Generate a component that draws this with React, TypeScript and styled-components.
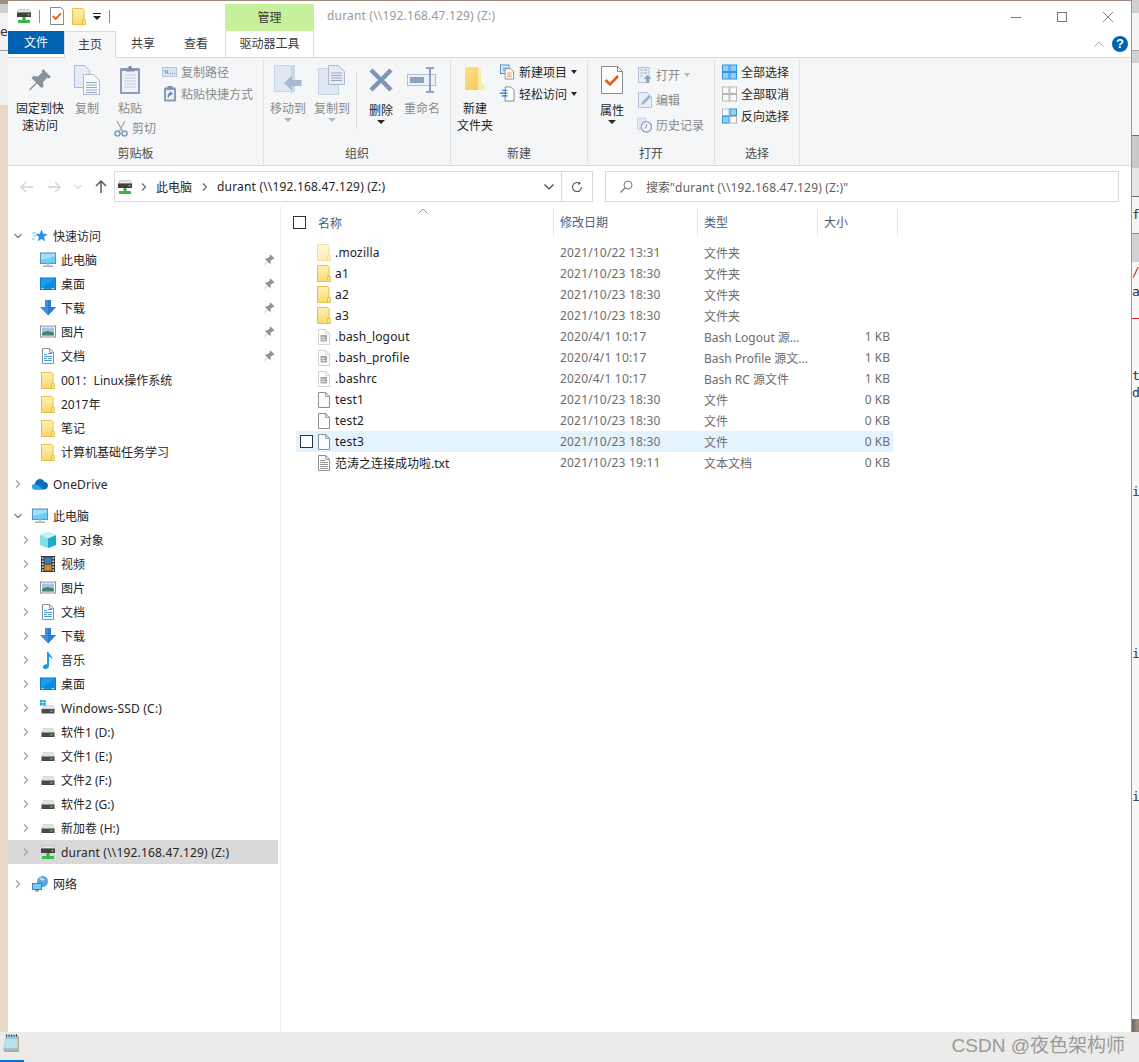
import React from "react";
import styled, { createGlobalStyle } from "styled-components";

const UI_FONT = `"Noto Sans", "Noto Sans CJK SC", sans-serif`;
const LATIN_SPACING = "0.18px";

const isLatin = (text: string) => /^[\x20-\x7e]*$/.test(text);

const GlobalStyle = createGlobalStyle`
  html, body {
    margin: 0;
    padding: 0;
    background: #ebebe9;
  }
  * {
    box-sizing: border-box;
  }
`;

/* ---------- small drawn icons ---------- */

const DriveNetIcon = () => (
  <svg width="16" height="16" viewBox="0 0 16 16">
    <path d="M2.5 1.5h11l1 3H1.5z" fill="#e4e4e4" stroke="#b9b9b9" strokeWidth=".6" />
    <rect x="1" y="4.5" width="14" height="4.5" fill="#3f3f3f" />
    <rect x="11.5" y="6" width="2" height="1.4" fill="#62d162" />
    <rect x="6.5" y="9" width="3" height="3" fill="#39a845" />
    <rect x="2" y="12" width="12" height="3" fill="#3cb64a" />
  </svg>
);

const DriveIcon = () => (
  <svg width="16" height="16" viewBox="0 0 16 16">
    <path d="M3 4.5h10l1.5 4h-13z" fill="#e3e3e3" stroke="#c4c4c4" strokeWidth=".5" />
    <rect x="1.5" y="8.5" width="13" height="4.5" fill="#4a4a4a" />
    <rect x="10.5" y="10" width="2" height="1.4" fill="#66d466" />
  </svg>
);

const SystemDriveIcon = () => (
  <svg width="16" height="16" viewBox="0 0 16 16">
    <path d="M3.5 5.5h9.5l1.5 3.5h-12z" fill="#e3e3e3" stroke="#c4c4c4" strokeWidth=".5" />
    <rect x="1.5" y="9" width="13" height="4.5" fill="#4a4a4a" />
    <rect x="10.5" y="10.5" width="2" height="1.4" fill="#66d466" />
    <path d="M0 0h2.6v2.4H0zM3.2 0h2.6v2.4H3.2zM0 3h2.6v2.4H0zM3.2 3h2.6v2.4H3.2z" fill="#12a5ec" />
  </svg>
);

const FolderIcon = ({ faded }: { faded?: boolean }) => (
  <svg width="14" height="17" viewBox="0 0 14 17" opacity={faded ? 0.5 : 1}>
    <defs>
      <linearGradient id="folderFill" x1="0" y1="0" x2="0" y2="1">
        <stop offset="0" stopColor="#ffefb4" />
        <stop offset="1" stopColor="#fcd971" />
      </linearGradient>
    </defs>
    <path d="M.5.5h10.5l1 1v14.9H.5z" fill="url(#folderFill)" stroke="#e9bf45" />
    <path d="M10.5 11.5h2.8v4.9h-2.8z" fill="#fde392" stroke="#e9bf45" />
  </svg>
);

const PageOutline = ({ stroke }: { stroke: string }) => (
  <path d="M1.5.5h7.2l3.8 3.8v11.2h-11z M8.7.5v3.8h3.8" fill="#fdfdfd" stroke={stroke} />
);

const FileIcon = () => (
  <svg width="14" height="16" viewBox="0 0 14 16">
    <PageOutline stroke="#8f8f8f" />
  </svg>
);

const ConfigFileIcon = () => (
  <svg width="14" height="16" viewBox="0 0 14 16">
    <PageOutline stroke="#d3d3d3" />
    <rect x="3.5" y="6" width="6.5" height="6.5" fill="#a5a9ad" />
    <rect x="4.5" y="8" width="3" height="1" fill="#e5e5e5" />
    <rect x="4.5" y="10" width="4" height="1" fill="#e5e5e5" />
  </svg>
);

const TextFileIcon = () => (
  <svg width="14" height="16" viewBox="0 0 14 16">
    <PageOutline stroke="#8f8f8f" />
    <path d="M3 5.5h5M3 7.5h8M3 9.5h8M3 11.5h8M3 13.5h8" stroke="#8a8a8a" strokeWidth=".9" />
  </svg>
);

const MonitorIcon = () => (
  <svg width="16" height="16" viewBox="0 0 16 16">
    <rect x=".5" y="1" width="15" height="10.5" fill="#6fcdf7" stroke="#5c93b8" />
    <path d="M1 2h14v2.5L1 8z" fill="#a3e1fb" />
    <rect x="6.5" y="11.5" width="3" height="2" fill="#c2c8cc" />
    <rect x="3" y="13.5" width="10" height="1.5" fill="#a8b0b6" />
  </svg>
);

const DesktopIcon = () => (
  <svg width="16" height="16" viewBox="0 0 16 16">
    <rect x=".5" y="2" width="15" height="11.5" fill="#199ff0" stroke="#0f78c9" />
    <path d="M1 12.5L14.5 3v9.5z" fill="#0f8ae0" />
    <path d="M1.5 12.6h2M12 12.6h2" stroke="#fff" strokeWidth=".8" />
  </svg>
);

const DownloadIcon = () => (
  <svg width="16" height="16" viewBox="0 0 16 16">
    <path d="M5 0h6v7h5l-8 8.5L0 7h5z" fill="#3f8fdd" />
    <path d="M8 0h3v7h5l-8 8.5z" fill="#2f7ccb" />
  </svg>
);

const PicturesIcon = () => (
  <svg width="16" height="16" viewBox="0 0 16 16">
    <rect x=".5" y="2" width="15" height="11" fill="#fff" stroke="#8f8f8f" />
    <rect x="2" y="3.5" width="12" height="8" fill="#9dc6e8" />
    <path d="M2 9c3-2.5 6-2 12-.5v3H2z" fill="#4f7f72" />
  </svg>
);

const DocsIcon = () => (
  <svg width="14" height="16" viewBox="0 0 14 16">
    <PageOutline stroke="#8f8f8f" />
    <path d="M3 6.5h3M7 5.5h4M3 8.5h8M3 10.5h3M7 10.5h4M3 12.5h8" stroke="#2f8fd6" strokeWidth=".9" />
  </svg>
);

const ObjectsIcon = () => (
  <svg width="16" height="16" viewBox="0 0 16 16">
    <path d="M8 0l8 3v10l-8 3-8-3V3z" fill="#7fe2ea" />
    <path d="M8 6.5l8-3.5v10l-8 3z" fill="#1fa9cf" />
    <path d="M8 0l8 3-8 3.5L0 3z" fill="#c3f3f6" />
  </svg>
);

const VideoIcon = () => (
  <svg width="14" height="16" viewBox="0 0 14 16">
    <rect width="14" height="16" fill="#3c3c3c" />
    <path d="M1 1.5h1.6v1.4H1zM1 4.5h1.6v1.4H1zM1 7.5h1.6v1.4H1zM1 10.5h1.6v1.4H1zM1 13.5h1.6v1.4H1zM11.4 1.5H13v1.4h-1.6zM11.4 4.5H13v1.4h-1.6zM11.4 7.5H13v1.4h-1.6zM11.4 10.5H13v1.4h-1.6zM11.4 13.5H13v1.4h-1.6z" fill="#d8d8d8" />
    <rect x="3.5" y="1.5" width="7" height="6" fill="#3d78c4" />
    <rect x="3.5" y="8.5" width="7" height="6" fill="#c98f2c" />
  </svg>
);

const MusicIcon = () => (
  <svg width="16" height="17" viewBox="0 0 16 17">
    <path d="M7 0h1.6c.3 2.6 4 3.8 4 7.2-1-1.6-2.4-2.2-3.6-2.4V14c0 1.8-1.8 3-3.6 3C3.7 17 3 16 3 14.900c0-1.700 1.900-2.900 4-2.700z" fill="#1a9ae8" />
  </svg>
);

const OneDriveIcon = () => (
  <svg width="16" height="12" viewBox="0 0 16 12">
    <path d="M3 11.500C1.300 11.500 0 10.300 0 8.700 0 7.200 1.200 6 2.700 5.900 3.300 3 5.600 1 8 1c2 0 3.800 1.200 4.500 3 2-.1 3.500 1.400 3.500 3.400 0 2.300-1.700 4.100-4 4.100z" fill="#0f6cbd" />
    <path d="M3 11.500C1.300 11.500 0 10.300 0 8.700 0 7.200 1.200 6 2.700 5.900l4.800 2.400 3.500 3.200z" fill="#28a8ea" />
  </svg>
);

const NetworkIcon = () => (
  <svg width="16" height="16" viewBox="0 0 16 16">
    <circle cx="10.500" cy="5.500" r="5.500" fill="#57a6de" />
    <path d="M7 2c2-1 5 0 6 2-2 1-5 1-6-2z" fill="#b9dcf3" />
    <rect x=".5" y="7.500" width="9" height="6" fill="#6fcdf7" stroke="#4c7fa3" />
    <rect x="3" y="14" width="4" height="1.500" fill="#8c969c" />
  </svg>
);

const StarIcon = () => (
  <svg width="16" height="16" viewBox="0 0 16 16">
    <path d="M9.500 1.500l1.700 4.300 4.300.3-3.400 2.800 1.100 4.400-3.700-2.400-3.700 2.400 1.100-4.400-3.400-2.800 4.300-.3z" fill="#2f8fe0" />
    <path d="M0 5h4M1 8h3M0 11h3" stroke="#73bdf0" strokeWidth="1" />
  </svg>
);

const SmallPin = () => (
  <svg width="12" height="12" viewBox="0 0 12 12">
    <path d="M7.500.5L11.500 4.500 10.500 5.500 9.700 5 7.500 7.200 7.700 9 6.800 9.900 4.500 7.600 1 11 .8 10.800 4.200 7.300 2 5l.9-.9 1.900.2L7 2.100 6.500 1.500z" fill="#8e959b" />
  </svg>
);

const Chevron = ({ open, color = "#a6a6a6" }: { open?: boolean; color?: string }) => (
  <svg width="8" height="8" viewBox="0 0 8 8">
    <path d={open ? "M.5 2l3.500 3.500L7.500 2" : "M2 .5L5.500 4 2 7.500"} fill="none" stroke={color} strokeWidth="1.300" />
  </svg>
);

/* ---------- ribbon icons ---------- */

const BLUE_LINE = "#a9b9d4";
const BLUE_FILL = "#e6ecf6";

const PinLarge = () => (
  <svg width="24" height="24" viewBox="0 0 24 24">
    <path d="M15 1l8 8-2 1.500-1.500-1L15 14l.5 4.500-2 1.500L9 15.500 2 22.500l-1-1 7-7-4.500-4.500 2-2 4.500.5L14.500 4 13.500 3z" fill="#8a9299" />
  </svg>
);

const CopyLarge = () => (
  <svg width="26" height="30" viewBox="0 0 26 30">
    <path d="M.5.5h10l5 5v17H.5z" fill={BLUE_FILL} stroke={BLUE_LINE} />
    <path d="M9.500 9.500h10l6 6v14h-16z" fill="#f7f9fc" stroke={BLUE_LINE} />
    <path d="M12 17.500h11M12 20h11M12 22.500h11M12 25h11M12 27.500h11" stroke="#9aa9c2" />
  </svg>
);

const PasteLarge = () => (
  <svg width="22" height="30" viewBox="0 0 22 30">
    <rect x="1" y="3" width="20" height="26" rx="1" fill="#8b9bb8" />
    <rect x="3" y="6" width="16" height="21" fill="#eef2f8" />
    <path d="M5 10h12M5 13h12M5 16h12M5 19h12M5 22h12" stroke="#c2cde0" />
    <path d="M7 4h2.500V1h3v3H15v2.500H7z" fill="#7f8fa9" />
  </svg>
);

const ScissorsIcon = () => (
  <svg width="14" height="16" viewBox="0 0 14 16">
    <path d="M3 0l5.500 10M11 0L5.500 10" stroke="#a7a7a7" strokeWidth="1.300" fill="none" />
    <circle cx="3.500" cy="12.500" r="2.500" fill="none" stroke="#7f98bd" strokeWidth="1.500" />
    <circle cx="10.500" cy="12.500" r="2.500" fill="none" stroke="#7f98bd" strokeWidth="1.500" />
  </svg>
);

const PathIcon = () => (
  <svg width="15" height="10" viewBox="0 0 15 10">
    <rect x=".5" y=".5" width="14" height="9" fill="#d8e2f0" stroke="#b8c6dc" />
    <path d="M3 3l1 4M5 3l1 4M8 6.500h1M10 6.500h1M12 6.500h1" stroke="#6f7e96" strokeWidth=".8" />
  </svg>
);

const ShortcutIcon = () => (
  <svg width="14" height="16" viewBox="0 0 14 16">
    <rect x="1" y="1.500" width="12" height="14" rx="1" fill="#8b9bb8" />
    <rect x="3" y="4" width="8" height="9.500" fill="#eef2f8" />
    <rect x="4.500" y="0" width="5" height="3" fill="#7f8fa9" />
    <path d="M5 12V9c0-1 .5-1.500 1.500-1.500H8M7 5.500L9.500 7.500 7 9.500z" fill="#6f86ad" stroke="#6f86ad" strokeWidth=".6" />
  </svg>
);

const MoveLarge = () => (
  <svg width="28" height="30" viewBox="0 0 28 30">
    <path d="M.5.5h20v26H.5z" fill="#dfe7f3" stroke="#c7d3e6" />
    <path d="M17 .5l3.500 1v25L17 29z" fill="#cbd7e9" />
    <path d="M10 18l8-7.500V15h9.500v6H18v4.500z" fill="#a8b9d3" />
  </svg>
);

const CopyToLarge = () => (
  <svg width="28" height="30" viewBox="0 0 28 30">
    <path d="M.5 3.500h20v26H.5z" fill="#dfe7f3" stroke="#c7d3e6" />
    <path d="M10.500.5h10l6 6v13h-16z" fill={BLUE_FILL} stroke={BLUE_LINE} />
    <path d="M13 8h11M13 10.500h11M13 13h11M13 15.500h11" stroke="#9aa9c2" />
  </svg>
);

const DeleteLarge = () => (
  <svg width="26" height="26" viewBox="0 0 26 26">
    <path d="M3 3l20 20M23 3L3 23" stroke="#7f93b5" strokeWidth="4.500" />
  </svg>
);

const RenameLarge = () => (
  <svg width="30" height="26" viewBox="0 0 30 26">
    <rect x=".5" y="7.500" width="28" height="11" fill="#eef2f8" stroke="#b4c3da" />
    <rect x="3" y="10" width="14" height="6" fill="#8fa1bd" />
    <path d="M19 1h8M23 1v24M19 25h8" stroke="#8fa1bd" strokeWidth="2" fill="none" />
  </svg>
);

const NewFolderLarge = () => (
  <svg width="20" height="28" viewBox="0 0 20 28">
    <defs>
      <linearGradient id="bigFolder" x1="0" y1="0" x2="1" y2="1">
        <stop offset="0" stopColor="#fde08a" />
        <stop offset="1" stopColor="#f3c453" />
      </linearGradient>
    </defs>
    <path d="M0 1h13v14l5 9H0v3z" fill="url(#bigFolder)" />
    <path d="M13 1l3 3v14h3l.5 6H13z" fill="#fbe9a8" />
  </svg>
);

const NewItemIcon = () => (
  <svg width="16" height="16" viewBox="0 0 16 16">
    <rect x=".5" y=".5" width="9" height="9" fill="#eaf3fb" stroke="#3a89c9" />
    <rect x="2.500" y="2.500" width="5" height="5" fill="#9fc6e6" />
    <path d="M5.500 4.500h6l3 3v8h-9z" fill="#fff" stroke="#8c8c8c" />
    <path d="M7.500 9h5M7.500 11h5M7.500 13h5" stroke="#e0853a" strokeWidth=".9" />
  </svg>
);

const EasyAccessIcon = () => (
  <svg width="16" height="16" viewBox="0 0 16 16">
    <path d="M5.500.5h6l3.500 3.500v11.500H5.500z" fill="#fff" stroke="#7f7f7f" />
    <path d="M2 4h6M0 7h8M2 10h6" stroke="#1f6fc4" strokeWidth="1.200" />
  </svg>
);

const PropertiesLarge = () => (
  <svg width="22" height="28" viewBox="0 0 22 28">
    <path d="M.5.500h16l5 5v22H.5z" fill="#fff" stroke="#8a8a8a" />
    <path d="M16.500.5v5h5" fill="none" stroke="#8a8a8a" />
    <path d="M4.500 14l4.500 4.500L17 10" fill="none" stroke="#ea5b14" strokeWidth="2.600" />
  </svg>
);

const OpenIcon = () => (
  <svg width="14" height="16" viewBox="0 0 14 16">
    <rect x=".5" y=".5" width="10.500" height="15" fill="#e8eef6" stroke="#b4c3da" />
    <path d="M2.500 3h2M2.500 6h2M2.500 9h2M6 3h3M6 6h3" stroke="#8fa1bd" strokeWidth="1.200" />
    <path d="M9.500 8l4 4h-2.500v4H8v-4H5.500z" fill="#8fa1bd" />
  </svg>
);

const EditIcon = () => (
  <svg width="14" height="16" viewBox="0 0 14 16">
    <path d="M.5.5h8.500l4.500 4.500v10.500H.5z" fill="#e8eef6" stroke="#b4c3da" />
    <path d="M3 13l1-3 7-7 2 2-7 7z" fill="#9db0cc" />
  </svg>
);

const HistoryIcon = () => (
  <svg width="16" height="16" viewBox="0 0 16 16">
    <rect x=".5" y=".5" width="9" height="12" fill="#dfe7f3" stroke="#c7d3e6" />
    <circle cx="10" cy="10" r="5.500" fill="#eef2f8" stroke="#93a0b5" strokeWidth="1.300" />
    <path d="M10 7v3.200l-2 1.500" fill="none" stroke="#7f8da5" />
  </svg>
);

// two by two squares of the selection commands; listed cells are the blue ones
const GridIcon = ({ on }: { on: number[] }) => (
  <svg width="16" height="16" viewBox="0 0 16 16">
    {[0, 1, 2, 3].map((n) => (
      <rect
        key={n}
        x={n % 2 === 0 ? 0.5 : 8.5}
        y={n < 2 ? 0.5 : 8.5}
        width="7"
        height="7"
        fill={on.includes(n) ? "#92cdf2" : "#f9f9f9"}
        stroke={on.includes(n) ? "#2a93dc" : "#b3b3b3"}
      />
    ))}
  </svg>
);

/* ---------- data ---------- */

type NavItem = {
  label: string;
  icon: React.ReactNode;
  level: number;
  arrow?: "open" | "closed";
  pinned?: boolean;
  selected?: boolean;
  section?: boolean;
};

const navItems: NavItem[] = [
  { label: "快速访问", icon: <StarIcon />, level: 0, arrow: "open" },
  { label: "此电脑", icon: <MonitorIcon />, level: 1, pinned: true },
  { label: "桌面", icon: <DesktopIcon />, level: 1, pinned: true },
  { label: "下载", icon: <DownloadIcon />, level: 1, pinned: true },
  { label: "图片", icon: <PicturesIcon />, level: 1, pinned: true },
  { label: "文档", icon: <DocsIcon />, level: 1, pinned: true },
  { label: "001：Linux操作系统", icon: <FolderIcon />, level: 1 },
  { label: "2017年", icon: <FolderIcon />, level: 1 },
  { label: "笔记", icon: <FolderIcon />, level: 1 },
  { label: "计算机基础任务学习", icon: <FolderIcon />, level: 1 },
  { label: "OneDrive", icon: <OneDriveIcon />, level: 0, arrow: "closed", section: true },
  { label: "此电脑", icon: <MonitorIcon />, level: 0, arrow: "open", section: true },
  { label: "3D 对象", icon: <ObjectsIcon />, level: 1, arrow: "closed" },
  { label: "视频", icon: <VideoIcon />, level: 1, arrow: "closed" },
  { label: "图片", icon: <PicturesIcon />, level: 1, arrow: "closed" },
  { label: "文档", icon: <DocsIcon />, level: 1, arrow: "closed" },
  { label: "下载", icon: <DownloadIcon />, level: 1, arrow: "closed" },
  { label: "音乐", icon: <MusicIcon />, level: 1, arrow: "closed" },
  { label: "桌面", icon: <DesktopIcon />, level: 1, arrow: "closed" },
  { label: "Windows-SSD (C:)", icon: <SystemDriveIcon />, level: 1, arrow: "closed" },
  { label: "软件1 (D:)", icon: <DriveIcon />, level: 1, arrow: "closed" },
  { label: "文件1 (E:)", icon: <DriveIcon />, level: 1, arrow: "closed" },
  { label: "文件2 (F:)", icon: <DriveIcon />, level: 1, arrow: "closed" },
  { label: "软件2 (G:)", icon: <DriveIcon />, level: 1, arrow: "closed" },
  { label: "新加卷 (H:)", icon: <DriveIcon />, level: 1, arrow: "closed" },
  { label: "durant (\\\\192.168.47.129) (Z:)", icon: <DriveNetIcon />, level: 1, arrow: "closed", selected: true },
  { label: "网络", icon: <NetworkIcon />, level: 0, arrow: "closed", section: true },
];

type FileItem = {
  name: string;
  date: string;
  type: string;
  size?: string;
  icon: React.ReactNode;
  hover?: boolean;
};

const files: FileItem[] = [
  { name: ".mozilla", date: "2021/10/22 13:31", type: "文件夹", icon: <FolderIcon faded /> },
  { name: "a1", date: "2021/10/23 18:30", type: "文件夹", icon: <FolderIcon /> },
  { name: "a2", date: "2021/10/23 18:30", type: "文件夹", icon: <FolderIcon /> },
  { name: "a3", date: "2021/10/23 18:30", type: "文件夹", icon: <FolderIcon /> },
  { name: ".bash_logout", date: "2020/4/1 10:17", type: "Bash Logout 源...", size: "1 KB", icon: <ConfigFileIcon /> },
  { name: ".bash_profile", date: "2020/4/1 10:17", type: "Bash Profile 源文...", size: "1 KB", icon: <ConfigFileIcon /> },
  { name: ".bashrc", date: "2020/4/1 10:17", type: "Bash RC 源文件", size: "1 KB", icon: <ConfigFileIcon /> },
  { name: "test1", date: "2021/10/23 18:30", type: "文件", size: "0 KB", icon: <FileIcon /> },
  { name: "test2", date: "2021/10/23 18:30", type: "文件", size: "0 KB", icon: <FileIcon /> },
  { name: "test3", date: "2021/10/23 18:30", type: "文件", size: "0 KB", icon: <FileIcon />, hover: true },
  { name: "范涛之连接成功啦.txt", date: "2021/10/23 19:11", type: "文本文档", size: "0 KB", icon: <TextFileIcon /> },
];

// slices of the windows behind this one, top to bottom
const leftBands = [
  { h: 4, bg: "#a58a80" },
  { h: 9, bg: "#cfcfcf" },
  { h: 37, bg: "#f2f2f2", text: "e" },
  { h: 1, bg: "#9a9a9a" },
  { h: 54, bg: "#f0f0f0" },
  { h: 927, bg: "#e6dac7" },
];

const rightBands = [
  { h: 13, bg: "#cfcfcf" },
  { h: 37, bg: "#f3f3f3" },
  { h: 1, bg: "#a8a8a8" },
  { h: 12, bg: "#d2d2d2" },
  { h: 36, bg: "#f6f6f6" },
  { h: 36, bg: "#f6f6f6" },
  { h: 1, bg: "#6f6f6f" },
  { h: 32, bg: "#c9c9c9" },
  { h: 28, bg: "#e6e6e6" },
  { h: 1, bg: "#6f6f6f" },
  { h: 36, bg: "#f4f4f4", text: "ft" },
  { h: 1, bg: "#8c8c8c" },
  { h: 28, bg: "#d2d2d2" },
  { h: 20, bg: "#f8f8f8", text: "/2", color: "#e02020" },
  { h: 20, bg: "#f8f8f8", text: "ar" },
  { h: 16, bg: "#f8f8f8", text: " l", color: "#e02020" },
  { h: 1, bg: "#e02020" },
  { h: 48, bg: "#f8f8f8" },
  { h: 17, bg: "#f8f8f8", text: "t" },
  { h: 17, bg: "#f8f8f8", text: "d" },
  { h: 82, bg: "#f8f8f8" },
  { h: 17, bg: "#f8f8f8", text: "ic" },
  { h: 145, bg: "#f8f8f8" },
  { h: 17, bg: "#f8f8f8", text: "ic" },
  { h: 36, bg: "#f8f8f8" },
  { h: 17, bg: "#f8f8f8", text: " 1" },
  { h: 73, bg: "#f8f8f8" },
  { h: 17, bg: "#f8f8f8", text: "ic" },
  { h: 214, bg: "#f8f8f8" },
];

/* ---------- page ---------- */

const App: React.FC = () => {
  return (
    <>
      <GlobalStyle />
      <Desktop>
        <Workspace>
          <SideStrip $w={8}>
            {leftBands.map((band, index) => (
              <Band key={index} $h={band.h} $bg={band.bg}>
                {band.text}
              </Band>
            ))}
          </SideStrip>

          <Window>
            <TitleRow>
              <QuickAccess>
                <QatSlot $w={16}>
                  <DriveNetIcon />
                </QatSlot>
                <QatSlot $w={14}>
                  <QatSeparator />
                </QatSlot>
                <QatSlot $w={22}>
                  <svg width="14" height="18" viewBox="0 0 22 28">
                    <path d="M.5.500h16l5 5v22H.5z" fill="#fff" stroke="#777" strokeWidth="1.500" />
                    <path d="M4.500 14l4.500 4.500L17 10" fill="none" stroke="#ea5b14" strokeWidth="3" />
                  </svg>
                </QatSlot>
                <QatSlot $w={22}>
                  <FolderIcon />
                </QatSlot>
                <QatSlot $w={14}>
                  <svg width="8" height="7" viewBox="0 0 8 7">
                    <path d="M0 0h8v1H0zM0 3h8L4 7z" fill="#222" />
                  </svg>
                </QatSlot>
                <QatSlot $w={10}>
                  <QatSeparator />
                </QatSlot>
              </QuickAccess>
              <ContextTab>管理</ContextTab>
              <WindowTitle>durant (\\192.168.47.129) (Z:)</WindowTitle>
              <WindowControls>
                <ControlButton>
                  <svg width="10" height="10" viewBox="0 0 10 10">
                    <path d="M0 5.500h10" stroke="#777" />
                  </svg>
                </ControlButton>
                <ControlButton>
                  <svg width="10" height="10" viewBox="0 0 10 10">
                    <rect x=".5" y=".5" width="9" height="9" fill="none" stroke="#777" />
                  </svg>
                </ControlButton>
                <ControlButton>
                  <svg width="10" height="10" viewBox="0 0 10 10">
                    <path d="M0 0l10 10M10 0L0 10" stroke="#777" strokeWidth=".9" />
                  </svg>
                </ControlButton>
              </WindowControls>
            </TitleRow>

            <TabRow>
              <FileTab>文件</FileTab>
              <HomeTab>主页</HomeTab>
              <PlainTab $w={54}>共享</PlainTab>
              <PlainTab $w={52}>查看</PlainTab>
              <ToolsTab>驱动器工具</ToolsTab>
              <TabRowEnd>
                <svg width="10" height="6" viewBox="0 0 10 6">
                  <path d="M.5 5.500L5 1l4.500 4.500" fill="none" stroke="#a0a0a0" />
                </svg>
                <HelpBadge>?</HelpBadge>
              </TabRowEnd>
            </TabRow>

            <Ribbon>
              <RibbonGroup $w={256}>
                <GroupBody $pad={4}>
                  <BigButton $w={56}>
                    <BigIcon>
                      <PinLarge />
                    </BigIcon>
                    固定到快
                    <br />
                    速访问
                  </BigButton>
                  <BigButton $w={38} $muted>
                    <BigIcon>
                      <CopyLarge />
                    </BigIcon>
                    复制
                  </BigButton>
                  <PasteColumn>
                    <BigButton $w={48} $muted>
                      <BigIcon>
                        <PasteLarge />
                      </BigIcon>
                      粘贴
                    </BigButton>
                    <CutRow>
                      <ScissorsIcon />
                      剪切
                    </CutRow>
                  </PasteColumn>
                  <SmallColumn $left={6} $top={1}>
                    <SmallRow $h={22} $muted>
                      <SmallIcon>
                        <PathIcon />
                      </SmallIcon>
                      复制路径
                    </SmallRow>
                    <SmallRow $h={22} $muted>
                      <SmallIcon>
                        <ShortcutIcon />
                      </SmallIcon>
                      粘贴快捷方式
                    </SmallRow>
                  </SmallColumn>
                </GroupBody>
                <GroupLabel>剪贴板</GroupLabel>
              </RibbonGroup>

              <RibbonGroup $w={187}>
                <GroupBody $pad={2}>
                  <BigButton $w={44} $muted>
                    <BigIcon>
                      <MoveLarge />
                    </BigIcon>
                    移动到
                    <Caret $muted />
                  </BigButton>
                  <BigButton $w={44} $muted>
                    <BigIcon>
                      <CopyToLarge />
                    </BigIcon>
                    复制到
                    <Caret $muted />
                  </BigButton>
                  <GroupDivider />
                  <BigButton $w={40}>
                    <BigIcon>
                      <DeleteLarge />
                    </BigIcon>
                    <DropLabel>删除</DropLabel>
                    <Caret />
                  </BigButton>
                  <BigButton $w={42} $muted>
                    <BigIcon>
                      <RenameLarge />
                    </BigIcon>
                    重命名
                  </BigButton>
                </GroupBody>
                <GroupLabel>组织</GroupLabel>
              </RibbonGroup>

              <RibbonGroup $w={137}>
                <GroupBody $pad={2}>
                  <BigButton $w={44}>
                    <BigIcon>
                      <NewFolderLarge />
                    </BigIcon>
                    新建
                    <br />
                    文件夹
                  </BigButton>
                  <SmallColumn $left={3} $top={1}>
                    <SmallRow $h={22}>
                      <SmallIcon>
                        <NewItemIcon />
                      </SmallIcon>
                      新建项目
                      <InlineCaret />
                    </SmallRow>
                    <SmallRow $h={22}>
                      <SmallIcon>
                        <EasyAccessIcon />
                      </SmallIcon>
                      轻松访问
                      <InlineCaret />
                    </SmallRow>
                  </SmallColumn>
                </GroupBody>
                <GroupLabel>新建</GroupLabel>
              </RibbonGroup>

              <RibbonGroup $w={127}>
                <GroupBody $pad={2}>
                  <BigButton $w={44}>
                    <BigIcon>
                      <PropertiesLarge />
                    </BigIcon>
                    <DropLabel>属性</DropLabel>
                    <Caret />
                  </BigButton>
                  <SmallColumn $left={3} $top={2}>
                    <SmallRow $h={25} $muted>
                      <SmallIcon>
                        <OpenIcon />
                      </SmallIcon>
                      打开
                      <InlineCaret $muted />
                    </SmallRow>
                    <SmallRow $h={25} $muted>
                      <SmallIcon>
                        <EditIcon />
                      </SmallIcon>
                      编辑
                    </SmallRow>
                    <SmallRow $h={25} $muted>
                      <SmallIcon>
                        <HistoryIcon />
                      </SmallIcon>
                      历史记录
                    </SmallRow>
                  </SmallColumn>
                </GroupBody>
                <GroupLabel>打开</GroupLabel>
              </RibbonGroup>

              <RibbonGroup $w={85}>
                <GroupBody $pad={7}>
                  <SmallColumn $left={0} $top={1}>
                    <SmallRow $h={22}>
                      <SmallIcon>
                        <GridIcon on={[0, 1, 2, 3]} />
                      </SmallIcon>
                      全部选择
                    </SmallRow>
                    <SmallRow $h={22}>
                      <SmallIcon>
                        <GridIcon on={[]} />
                      </SmallIcon>
                      全部取消
                    </SmallRow>
                    <SmallRow $h={22}>
                      <SmallIcon>
                        <GridIcon on={[1, 2]} />
                      </SmallIcon>
                      反向选择
                    </SmallRow>
                  </SmallColumn>
                </GroupBody>
                <GroupLabel>选择</GroupLabel>
              </RibbonGroup>
            </Ribbon>

            <NavBar>
              <NavArrows>
                <svg width="14" height="12" viewBox="0 0 14 12">
                  <path d="M6 1L1 6l5 5M1 6h12" fill="none" stroke="#d2d2d2" strokeWidth="1.300" />
                </svg>
                <svg width="14" height="12" viewBox="0 0 14 12">
                  <path d="M8 1l5 5-5 5M13 6H1" fill="none" stroke="#d2d2d2" strokeWidth="1.300" />
                </svg>
                <Chevron open color="#d9d9d9" />
                <svg width="12" height="13" viewBox="0 0 12 13">
                  <path d="M1 6l5-5 5 5M6 1v12" fill="none" stroke="#5c5c5c" strokeWidth="1.500" />
                </svg>
              </NavArrows>
              <AddressBox>
                <AddressPath>
                  <DriveNetIcon />
                  <Crumb $w={23}>
                    <Chevron color="#6d6d6d" />
                  </Crumb>
                  此电脑
                  <Crumb $w={25}>
                    <Chevron color="#6d6d6d" />
                  </Crumb>
                  <LatinText>durant (\\192.168.47.129) (Z:)</LatinText>
                </AddressPath>
                <AddressDrop>
                  <svg width="10" height="6" viewBox="0 0 10 6">
                    <path d="M.5.5L5 5l4.500-4.500" fill="none" stroke="#444" strokeWidth="1.200" />
                  </svg>
                </AddressDrop>
                <RefreshSlot>
                  <svg width="12" height="12" viewBox="0 0 12 12">
                    <path d="M10.500 6A4.500 4.500 0 1 1 8.500 2.300" fill="none" stroke="#555" strokeWidth="1.100" />
                    <path d="M7.500.5l2.500 2-2.700 1.500z" fill="#555" />
                  </svg>
                </RefreshSlot>
              </AddressBox>
              <SearchBox>
                <svg width="13" height="13" viewBox="0 0 13 13">
                  <circle cx="8" cy="5" r="4" fill="none" stroke="#7a7a7a" />
                  <path d="M5 8l-4.500 4.500" stroke="#7a7a7a" strokeWidth="1.200" />
                </svg>
                <span>
                  搜索<LatinText>"durant (\\192.168.47.129) (Z:)"</LatinText>
                </span>
              </SearchBox>
            </NavBar>

            <Body>
              <NavPane>
                {navItems.map((item, index) => (
                  <TreeRow key={index} $level={item.level} $selected={item.selected} $section={item.section}>
                    <ArrowSlot>
                      {item.arrow && <Chevron open={item.arrow === "open"} color={item.arrow === "open" ? "#7f7f7f" : "#a6a6a6"} />}
                    </ArrowSlot>
                    <TreeIcon>{item.icon}</TreeIcon>
                    <TreeLabel $latin={isLatin(item.label)}>{item.label}</TreeLabel>
                    {item.pinned && (
                      <PinSlot>
                        <SmallPin />
                      </PinSlot>
                    )}
                  </TreeRow>
                ))}
              </NavPane>

              <ContentPane>
                <ColumnHeader>
                  <NameHeader>
                    <CheckBox />
                    <span>名称</span>
                    <SortMark>
                      <svg width="10" height="6" viewBox="0 0 10 6">
                        <path d="M.5 5.500L5 1l4.500 4.500" fill="none" stroke="#9a9a9a" />
                      </svg>
                    </SortMark>
                  </NameHeader>
                  <HeaderCell $w={144}>修改日期</HeaderCell>
                  <HeaderCell $w={120}>类型</HeaderCell>
                  <HeaderCell $w={80}>大小</HeaderCell>
                </ColumnHeader>

                <FileList>
                  {files.map((file) => (
                    <FileRow key={file.name} $hover={file.hover}>
                      <FilePrefix>
                        <CheckSlot>{file.hover && <CheckBox />}</CheckSlot>
                        {file.icon}
                      </FilePrefix>
                      <FileName $latin={isLatin(file.name)}>{file.name}</FileName>
                      <FileMeta $latin>{file.date}</FileMeta>
                      <FileMeta>{file.type}</FileMeta>
                      <FileSize>{file.size}</FileSize>
                    </FileRow>
                  ))}
                </FileList>
              </ContentPane>
            </Body>
          </Window>

          <SideStrip $w={7} $right>
            {rightBands.map((band, index) => (
              <Band key={index} $h={band.h} $bg={band.bg} $color={band.color}>
                {band.text}
              </Band>
            ))}
          </SideStrip>
        </Workspace>

        <BottomBar>
          <svg width="16" height="18" viewBox="0 0 16 18">
            <path d="M3 2h13v16H1z" fill="#b8a98c" />
            <path d="M3 1h12v15H0z" fill="#8fcbe0" />
            <path d="M2.500 5h12v9H1z" fill="#b9e2ef" />
            <path d="M3.500 .5v2M6 .5v2M8.500 .5v2M11 .5v2M13.500 .5v2" stroke="#222" />
          </svg>
          <Watermark>CSDN @夜色架构师</Watermark>
          <TaskIndicator />
        </BottomBar>
      </Desktop>
    </>
  );
};

export default App;

const Desktop = styled.div`
  position: relative;
  width: 1139px;
  height: 1062px;
  display: flex;
  flex-direction: column;
  overflow: hidden;
  font-family: ${UI_FONT};
  font-size: 12px;
  color: #262626;
`;

const Workspace = styled.div`
  height: 1032px;
  display: flex;
  background: #9d8b80;
`;

const SideStrip = styled.div<{ $w: number; $right?: boolean }>`
  width: ${(p) => p.$w}px;
  flex-shrink: 0;
  display: flex;
  flex-direction: column;
  overflow: hidden;
  box-shadow: inset ${(p) => (p.$right ? "3px" : "-1px")} 0 2px rgba(0, 0, 0, 0.22);
`;

const Band = styled.div<{ $h: number; $bg: string; $color?: string }>`
  height: ${(p) => p.$h}px;
  flex-shrink: 0;
  background: ${(p) => p.$bg};
  color: ${(p) => p.$color || "#333"};
  font-family: "DejaVu Sans Mono", monospace;
  font-size: 13px;
  line-height: ${(p) => p.$h}px;
  white-space: pre;
`;

const Window = styled.div`
  flex: 1;
  min-width: 0;
  margin-top: 1px;
  display: flex;
  flex-direction: column;
  background: #fff;
  border-right: 1px solid #9a9a9a;
`;

const LatinText = styled.span`
  letter-spacing: ${LATIN_SPACING};
`;

const TitleRow = styled.div`
  height: 30px;
  display: flex;
  align-items: flex-end;
  flex-shrink: 0;
`;

const QuickAccess = styled.div`
  width: 217px;
  height: 30px;
  padding-left: 8px;
  display: flex;
  align-items: center;
`;

const QatSlot = styled.div<{ $w: number }>`
  width: ${(p) => p.$w}px;
  display: flex;
  justify-content: center;
  align-items: center;
`;

const QatSeparator = styled.div`
  width: 1px;
  height: 13px;
  background: #8c8c8c;
`;

const ContextTab = styled.div`
  width: 89px;
  height: 27px;
  background: #c6f09c;
  color: #3a3a3a;
  text-align: center;
  line-height: 27px;
`;

const WindowTitle = styled.div`
  height: 30px;
  margin-left: 13px;
  line-height: 29px;
  letter-spacing: ${LATIN_SPACING};
  color: #9a9a9a;
`;

const WindowControls = styled.div`
  margin-left: auto;
  display: flex;
`;

const ControlButton = styled.div`
  width: 46px;
  height: 29px;
  display: flex;
  align-items: center;
  justify-content: center;
`;

const TabRow = styled.div`
  height: 27px;
  display: flex;
  flex-shrink: 0;
  border-bottom: 1px solid #dadbdc;
  line-height: 26px;
  color: #3b3b3b;
`;

const FileTab = styled.div`
  width: 56px;
  height: 23px;
  background: #0063b1;
  color: #fff;
  text-align: center;
  line-height: 23px;
`;

const HomeTab = styled.div`
  width: 52px;
  height: 27px;
  background: #f5f6f7;
  border: 1px solid #dadbdc;
  border-bottom: none;
  text-align: center;
  line-height: 25px;
  z-index: 1;
`;

const PlainTab = styled.div<{ $w: number }>`
  width: ${(p) => p.$w}px;
  text-align: center;
`;

const ToolsTab = styled.div`
  width: 89px;
  margin-left: 3px;
  border-left: 1px solid #dadbdc;
  border-right: 1px solid #dadbdc;
  text-align: center;
`;

const TabRowEnd = styled.div`
  margin-left: auto;
  padding-right: 3px;
  display: flex;
  align-items: center;
  gap: 8px;
`;

const HelpBadge = styled.div`
  width: 16px;
  height: 16px;
  border-radius: 50%;
  background: #0063b1;
  color: #fff;
  font-family: "Liberation Sans", sans-serif;
  font-size: 13px;
  font-weight: bold;
  line-height: 16px;
  text-align: center;
`;

const Ribbon = styled.div`
  height: 108px;
  flex-shrink: 0;
  display: flex;
  background: #f5f6f7;
  border-bottom: 1px solid #dadbdc;
`;

const RibbonGroup = styled.div<{ $w: number }>`
  width: ${(p) => p.$w}px;
  height: 104px;
  margin-top: 2px;
  display: flex;
  flex-direction: column;
  border-right: 1px solid #e0e1e2;
`;

const GroupBody = styled.div<{ $pad: number }>`
  height: 85px;
  padding-left: ${(p) => p.$pad}px;
  display: flex;
`;

const GroupLabel = styled.div`
  height: 18px;
  text-align: center;
  line-height: 18px;
  color: #4d4d4d;
`;

const BigButton = styled.div<{ $w: number; $muted?: boolean }>`
  width: ${(p) => p.$w}px;
  flex-shrink: 0;
  display: flex;
  flex-direction: column;
  align-items: center;
  text-align: center;
  line-height: 17px;
  white-space: nowrap;
  color: ${(p) => (p.$muted ? "#8a8a8a" : "#262626")};
`;

const BigIcon = styled.div`
  height: 40px;
  display: flex;
  align-items: center;
  justify-content: center;
`;

const DropLabel = styled.span`
  margin-top: 3px;
  line-height: 16px;
`;

const Caret = styled.i<{ $muted?: boolean }>`
  display: block;
  margin-top: 1px;
  width: 0;
  height: 0;
  border-left: 4px solid transparent;
  border-right: 4px solid transparent;
  border-top: 4px solid ${(p) => (p.$muted ? "#b5b5b5" : "#262626")};
`;

const InlineCaret = styled(Caret)`
  margin: 0;
  border-left-width: 3.5px;
  border-right-width: 3.5px;
`;

const PasteColumn = styled.div`
  display: flex;
  flex-direction: column;
`;

const CutRow = styled.div`
  margin-top: 3px;
  padding-left: 8px;
  display: flex;
  align-items: center;
  gap: 4px;
  line-height: 18px;
  color: #8a8a8a;
`;

const GroupDivider = styled.div`
  width: 1px;
  height: 56px;
  margin: 13px 4px 0 2px;
  background: #dadbdc;
`;

const SmallColumn = styled.div<{ $left: number; $top: number }>`
  margin-left: ${(p) => p.$left}px;
  padding-top: ${(p) => p.$top}px;
  display: flex;
  flex-direction: column;
`;

const SmallRow = styled.div<{ $h: number; $muted?: boolean }>`
  height: ${(p) => p.$h}px;
  display: flex;
  align-items: center;
  gap: 4px;
  white-space: nowrap;
  color: ${(p) => (p.$muted ? "#8a8a8a" : "#262626")};
`;

const SmallIcon = styled.div`
  width: 15px;
  display: flex;
  justify-content: center;
`;

const NavBar = styled.div`
  height: 40px;
  flex-shrink: 0;
  padding: 5px 12px 4px 0;
  display: flex;
`;

const NavArrows = styled.div`
  width: 106px;
  padding: 0 7px 0 12px;
  display: flex;
  align-items: center;
  justify-content: space-between;
`;

const AddressBox = styled.div`
  width: 479px;
  height: 31px;
  display: flex;
  align-items: center;
  border: 1px solid #d9d9d9;
`;

const AddressPath = styled.div`
  flex: 1;
  padding-left: 2px;
  display: flex;
  align-items: center;
  color: #262626;
`;

const Crumb = styled.span<{ $w: number }>`
  width: ${(p) => p.$w}px;
  padding-left: ${(p) => p.$w - 16}px;
  display: flex;
`;

const AddressDrop = styled.div`
  width: 18px;
  display: flex;
  justify-content: center;
`;

const RefreshSlot = styled.div`
  width: 31px;
  height: 100%;
  margin-left: 3px;
  display: flex;
  align-items: center;
  justify-content: center;
  border-left: 1px solid #d9d9d9;
`;

const SearchBox = styled.div`
  flex: 1;
  height: 31px;
  margin-left: 12px;
  padding-left: 14px;
  display: flex;
  align-items: center;
  gap: 13px;
  border: 1px solid #d9d9d9;
  color: #5f5f5f;
`;

const Body = styled.div`
  flex: 1;
  min-height: 0;
  display: flex;
`;

const NavPane = styled.div`
  width: 273px;
  flex-shrink: 0;
  padding-top: 18px;
  border-right: 1px solid #f0f0f0;
`;

const TreeRow = styled.div<{ $level: number; $selected?: boolean; $section?: boolean }>`
  width: 270px;
  height: 24px;
  margin-top: ${(p) => (p.$section ? 8 : 0)}px;
  padding: 0 3px 0 ${(p) => 6 + p.$level * 8}px;
  display: flex;
  align-items: center;
  background: ${(p) => (p.$selected ? "#d9d9d9" : "transparent")};
`;

const ArrowSlot = styled.div`
  width: 8px;
  display: flex;
`;

const TreeIcon = styled.div`
  width: 16px;
  margin-left: 10px;
  display: flex;
  justify-content: center;
`;

const TreeLabel = styled.span<{ $latin?: boolean }>`
  margin-left: 5px;
  white-space: nowrap;
  letter-spacing: ${(p) => (p.$latin ? LATIN_SPACING : "0")};
`;

const PinSlot = styled.div`
  margin-left: auto;
  display: flex;
`;

const ContentPane = styled.div`
  flex: 1;
  padding-top: 3px;
`;

const ColumnHeader = styled.div`
  height: 27px;
  display: flex;
  color: #4c607a;
`;

const HeaderCell = styled.div<{ $w: number }>`
  width: ${(p) => p.$w}px;
  padding-left: 6px;
  border-right: 1px solid #e5e5e5;
  line-height: 27px;
`;

const NameHeader = styled.div`
  position: relative;
  width: 273px;
  padding-left: 12px;
  display: flex;
  align-items: center;
  gap: 12px;
  border-right: 1px solid #e5e5e5;
`;

const SortMark = styled.div`
  position: absolute;
  top: -1px;
  left: 137px;
  display: flex;
`;

const CheckBox = styled.div`
  width: 13px;
  height: 13px;
  background: #fff;
  border: 1px solid #333;
`;

const FileList = styled.div`
  margin: 6px 0 0 15px;
  width: 597px;
`;

const FileRow = styled.div<{ $hover?: boolean }>`
  height: 21px;
  padding-right: 3px;
  display: grid;
  grid-template-columns: 39px 225px 144px 1fr 62px;
  align-items: center;
  background: ${(p) => (p.$hover ? "#e5f3ff" : "transparent")};
`;

const FilePrefix = styled.div`
  padding-left: 4px;
  display: flex;
  align-items: center;
`;

const CheckSlot = styled.div`
  width: 17px;
  display: flex;
`;

const FileName = styled.span<{ $latin?: boolean }>`
  white-space: nowrap;
  color: #1c1c1c;
  letter-spacing: ${(p) => (p.$latin ? LATIN_SPACING : "0")};
`;

const FileMeta = styled.span<{ $latin?: boolean }>`
  white-space: nowrap;
  color: #6d6d6d;
  letter-spacing: ${(p) => (p.$latin ? LATIN_SPACING : "0")};
`;

const FileSize = styled(FileMeta)`
  text-align: right;
`;

const BottomBar = styled.div`
  flex: 1;
  padding: 2px 14px 0 3px;
  display: flex;
  justify-content: space-between;
  background: #ebebe9;
`;

const Watermark = styled.div`
  font-family: "Liberation Sans", "Noto Sans CJK SC", sans-serif;
  font-size: 19px;
  line-height: 24px;
  color: #9a9a9a;
`;

const TaskIndicator = styled.div`
  position: absolute;
  left: 0;
  bottom: 0;
  width: 24px;
  height: 2px;
  background: #0078d7;
`;
